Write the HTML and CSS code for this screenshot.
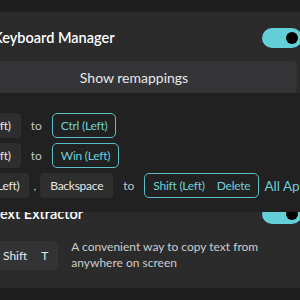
FILE: index.html
```html
<!DOCTYPE html>
<html lang="en">
<head>
<meta charset="utf-8">
<title>PowerToys Dashboard</title>
<link rel="stylesheet" href="styles.css">
</head>
<body>
  <section class="card km">
    <div class="card-head">
      <span class="title">Keyboard Manager</span>
      <span class="toggle"><span class="knob"></span></span>
    </div>
    <button class="remap-btn" type="button">Show remappings</button>
  </section>

  <section class="card te">
    <div class="card-head">
      <span class="title">Text Extractor</span>
      <span class="toggle"><span class="knob"></span></span>
    </div>
    <div class="card-body">
      <div class="shortcut"><span>Win</span><span>Shift</span><span>T</span></div>
      <p class="desc">A convenient way to copy text from<br>anywhere on screen</p>
    </div>
  </section>

  <div class="flyout">
    <ul class="remaps">
      <li class="remap">
        <span class="key">Alt (Left)</span>
        <span class="to">to</span>
        <span class="target"><span>Ctrl (Left)</span></span>
      </li>
      <li class="remap">
        <span class="key">Alt (Left)</span>
        <span class="to">to</span>
        <span class="target"><span>Win (Left)</span></span>
      </li>
      <li class="remap">
        <span class="key">Shift (Left)</span>
        <span class="comma">,</span>
        <span class="key">Backspace</span>
        <span class="to">to</span>
        <span class="target"><span>Shift (Left)</span><span>Delete</span></span>
        <span class="apps">All Apps</span>
      </li>
    </ul>
  </div>
</body>
</html>
```

FILE: styles.css
```css
html, body {
  margin: 0;
  overflow: hidden;
}

body {
  position: relative;
  width: 300px;
  height: 300px;
  padding-top: 12px;
  box-sizing: border-box;
  background: #1f1f20;
  font-family: Lato, "Open Sans", sans-serif;
  color: #ffffff;
}

.card {
  background: #2b2b2c;
  margin: 0 -20px 0 -35px;
  border-radius: 6px;
}

.km {
  padding-bottom: 12px;
}

.te {
  margin-top: 83px;
}

.card-head {
  box-sizing: border-box;
  height: 49px;
  padding: 2px 18px 0 28px;
  display: flex;
  align-items: center;
  justify-content: space-between;
}

.title {
  font-size: 14.5px;
  font-weight: 600;
  color: #ffffff;
}

.toggle {
  box-sizing: border-box;
  width: 40px;
  height: 20px;
  border-radius: 10px;
  background: #63cfd7;
  display: flex;
  align-items: center;
  justify-content: flex-end;
  padding: 0 4px;
}

.knob {
  width: 12px;
  height: 12px;
  border-radius: 50%;
  background: #000000;
}

.remap-btn {
  display: block;
  box-sizing: border-box;
  width: calc(100% - 29px);
  height: 32px;
  margin: 0 23px 0 6px;
  padding: 0;
  border: 0;
  border-radius: 4px;
  background: #343437;
  color: #e8e8e8;
  font-family: Lato, "Open Sans", sans-serif;
  font-size: 14px;
}

.card-body {
  display: flex;
  align-items: center;
  gap: 13px;
  padding: 2px 0 17px 0;
}

.shortcut {
  display: flex;
  align-items: center;
  gap: 14px;
  height: 29px;
  margin-left: -10px;
  padding: 0 10px 0 12px;
  background: #333336;
  border-radius: 4px;
  font-size: 12px;
  color: #e8e8e8;
}

.desc {
  margin: 0;
  font-size: 12px;
  line-height: 16px;
  color: #cdcdcd;
}

.flyout {
  position: absolute;
  top: 93px;
  left: -60px;
  right: -40px;
  height: 119px;
  box-sizing: border-box;
  padding: 20px 0 0 18px;
  background: #212122;
}

.remaps {
  list-style: none;
  margin: 0;
  padding: 0;
  display: flex;
  flex-direction: column;
  gap: 5px;
}

.remap {
  display: flex;
  align-items: center;
  gap: 10px;
  height: 25px;
  white-space: nowrap;
}

.key {
  display: flex;
  align-items: center;
  height: 25px;
  padding: 0 10px;
  background: #2e2e2f;
  border-radius: 4px;
  font-size: 12px;
  letter-spacing: -0.25px;
  color: #e6e6e6;
}

.to {
  font-size: 12px;
  color: #c4c4c4;
}

.comma {
  margin: 0 -6px;
  font-size: 12px;
  color: #cccccc;
}

.target {
  box-sizing: border-box;
  display: flex;
  align-items: center;
  gap: 12px;
  height: 25px;
  padding: 0 8px;
  border: 1.5px solid #5cbfc6;
  border-radius: 5px;
  font-size: 12px;
  letter-spacing: -0.25px;
  color: #6ecfd6;
}

.apps {
  margin-left: -5px;
  font-size: 13.5px;
  color: #6ecfd6;
}
```
